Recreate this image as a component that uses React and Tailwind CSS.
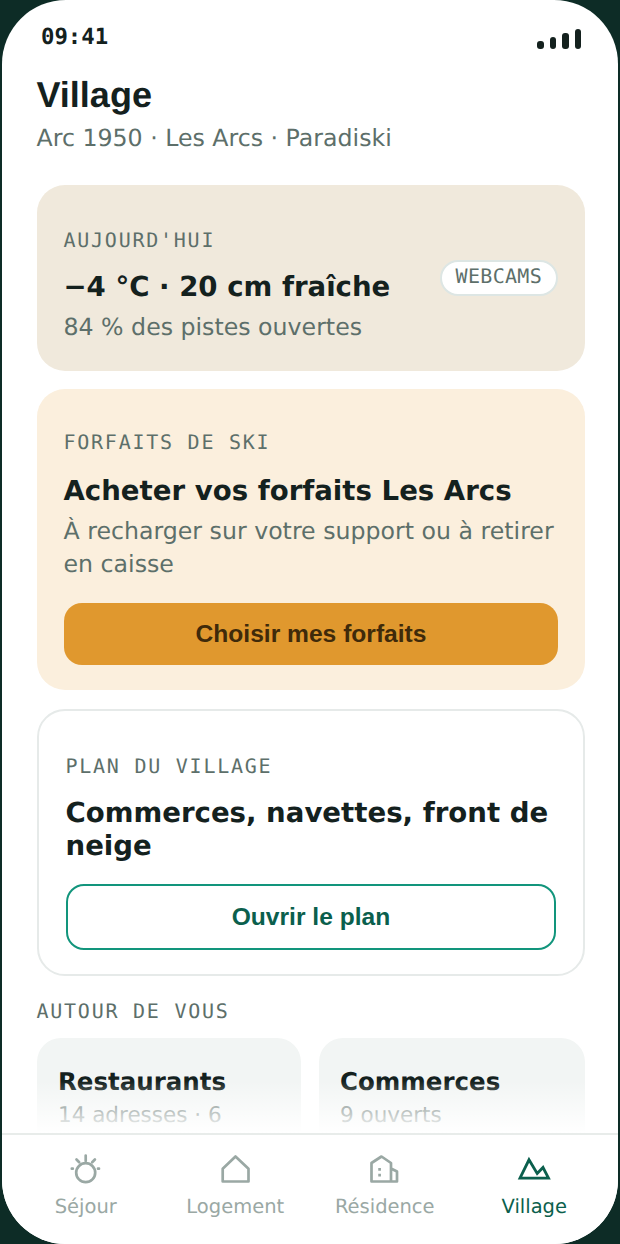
import React from 'react'

const sans = 'font-["DejaVu_Sans",sans-serif]'
const mono = 'font-["DejaVu_Sans_Mono",monospace]'
const arial = 'font-["Liberation_Sans",Arial,sans-serif]'

// Section label in small spaced monospace
const Eyebrow = ({ children, className = '' }) => (
  <div className={`${mono} ml-[-0.5px] text-[20px] leading-[24px] tracking-[1.75px] text-[#5d6f6a] ${className}`}>{children}</div>
)

const SunIcon = () => (
  <svg width="36" height="36" viewBox="0 0 36 36" fill="none" stroke="currentColor" strokeWidth="2.7" strokeLinecap="round">
    <circle cx="17.700" cy="19.700" r="9.500" />
    <path d="M17.700 2.500V8M8.500 6.500l2.700 2.700M26.900 6.500l-2.700 2.700M3.800 15.700h1M30 15.700h1" />
  </svg>
)

const HomeIcon = () => (
  <svg width="36" height="36" viewBox="0 0 36 36" fill="none" stroke="currentColor" strokeWidth="2.700" strokeLinejoin="round">
    <path d="M5.700 28.500V15.800L18.500 3.500L31.500 15.800V28.500Z" />
  </svg>
)

const BuildingIcon = () => (
  <svg width="36" height="36" viewBox="0 0 36 36" fill="none" stroke="currentColor" strokeWidth="2.700" strokeLinejoin="round">
    <path d="M4.500 28.500V10L14.500 3.500L24 10V28.500ZM24 15.500L30 18.500V28.500H24" />
    <path d="M12.600 15v2.800M12.600 20.800v2.800" />
  </svg>
)

const MountainIcon = () => (
  <svg width="36" height="36" viewBox="0 0 36 36" fill="none" stroke="currentColor" strokeWidth="2.800">
    <path d="M4 25.200H32.500L27 14.500L21.200 20.500L13 6.800Z" />
  </svg>
)

const tabs = [
  { label: 'Séjour', Icon: SunIcon },
  { label: 'Logement', Icon: HomeIcon },
  { label: 'Résidence', Icon: BuildingIcon },
  { label: 'Village', Icon: MountainIcon, active: true },
]

const NearbyCard = ({ title, sub, className = '' }) => (
  <div className={`h-[140px] rounded-[24px] bg-[#f2f5f4] px-[21px] pt-[27px] ${className}`}>
    <div className={`${sans} text-[24.5px] leading-[34px] font-bold text-[#14211e]`}>{title}</div>
    <div className={`${sans} mt-[1px] text-[21.5px] leading-[32px] text-[#5d6f6a] whitespace-nowrap`}>{sub}</div>
  </div>
)

const App = () => {
  return (
    <div className="w-[620px] h-[1244px] bg-[#0d2c26] overflow-hidden [text-rendering:geometricPrecision]">
      <div className="relative mx-[2px] h-full rounded-[64px] bg-white flex flex-col overflow-hidden">
        {/* Status bar */}
        <div className="flex items-start justify-between pl-[39px] pr-[37px] pt-[23px] h-[60px]">
          <span className={`${mono} text-[22.3px] leading-[28px] font-bold text-[#14211e]`}>09:41</span>
          <div className="flex items-end gap-[6px] h-[20px] mt-[6px]">
            <span className="w-[6.500px] h-[8px] rounded-[3px] bg-[#14211e]" />
            <span className="w-[6.500px] h-[12px] rounded-[3px] bg-[#14211e]" />
            <span className="w-[6.500px] h-[16px] rounded-[3px] bg-[#14211e]" />
            <span className="w-[6.500px] h-[20px] rounded-[3px] bg-[#14211e]" />
          </div>
        </div>

        <div className="flex-1 overflow-hidden pl-[35px] pr-[33px]">
          {/* Header */}
          <h1 className={`${arial} ml-[-0.5px] mt-[13px] text-[36px] leading-[44px] font-bold text-[#14211e]`}>Village</h1>
          <p className={`${sans} ml-[-0.5px] mt-[1px] text-[23.66px] leading-[40px] text-[#5d6f6a]`}>Arc 1950 · Les Arcs · Paradiski</p>

          {/* Today */}
          <section className="mt-[27px] h-[186px] rounded-[28px] bg-[#f0e9dc] px-[27px] pt-[43px] flex items-start justify-between">
            <div>
              <Eyebrow>AUJOURD'HUI</Eyebrow>
              <div className={`${sans} ml-[-0.5px] mt-[17px] text-[27.6px] leading-[36px] font-bold text-[#14211e]`}>−4 °C · 20 cm fraîche</div>
              <div className={`${sans} ml-[-0.5px] mt-[6px] text-[23.66px] leading-[32px] text-[#5d6f6a]`}>84 % des pistes ouvertes</div>
            </div>
            <span className={`${mono} mt-[32px] h-[36px] px-[14px] pb-[4px] flex items-center rounded-full border-2 border-[#dde6e4] bg-white text-[20px] tracking-[0.3px] text-[#5d6f6a]`}>WEBCAMS</span>
          </section>

          {/* Ski passes */}
          <section className="mt-[18px] h-[301px] rounded-[28px] bg-[#fbefdd] px-[27px] pt-[41px]">
            <Eyebrow>FORFAITS DE SKI</Eyebrow>
            <div className={`${sans} ml-[-0.5px] mt-[19px] text-[27.6px] leading-[36px] font-bold text-[#14211e]`}>Acheter vos forfaits Les Arcs</div>
            <div className={`${sans} ml-[-0.5px] mt-[6px] text-[23.66px] leading-[33px] text-[#5d6f6a]`}>À recharger sur votre support ou à retirer en caisse</div>
            <button className={`${arial} mt-[22px] w-full h-[62px] rounded-[18px] bg-[#e0982e] text-[24.6px] font-bold text-[#3f2a0a]`}>Choisir mes forfaits</button>
          </section>

          {/* Village map */}
          <section className="mt-[19px] h-[267px] rounded-[28px] border-2 border-[#e6eae9] px-[27px] pt-[43px]">
            <Eyebrow>PLAN DU VILLAGE</Eyebrow>
            <div className={`${sans} ml-[-0.5px] mt-[18px] text-[27.6px] leading-[33px] font-bold text-[#14211e]`}>Commerces, navettes, front de neige</div>
            <button className={`${arial} mt-[22px] w-full h-[66px] rounded-[18px] border-2 border-[#12957c] text-[24.6px] font-bold text-[#0b5f4d]`}>Ouvrir le plan</button>
          </section>

          {/* Around you */}
          <Eyebrow className="mt-[23px]">AUTOUR DE VOUS</Eyebrow>
          <div className="mt-[15px] flex gap-[18px]">
            <NearbyCard className="w-[264px]" title="Restaurants" sub="14 adresses · 6" />
            <NearbyCard className="flex-1" title="Commerces" sub="9 ouverts" />
          </div>
        </div>

        {/* Fade over the scrolled content */}
        <div className="absolute left-0 right-0 bottom-[111px] h-[52px] bg-gradient-to-b from-white/0 to-white" />

        {/* Tab bar */}
        <nav className="absolute left-0 right-0 bottom-0 h-[111px] border-t-2 border-[#e8ecea] bg-white grid grid-cols-4 px-[9px]">
          {tabs.map(({ label, Icon, active }) => (
            <div key={label} className={`flex flex-col items-center pt-[18px] ${active ? 'text-[#0b5f4d]' : 'text-[#9aa8a4]'}`}>
              <Icon />
              <span className={`${sans} mt-[4px] text-[19.5px] leading-[28px]`}>{label}</span>
            </div>
          ))}
        </nav>
      </div>
    </div>
  )
}

export default App
